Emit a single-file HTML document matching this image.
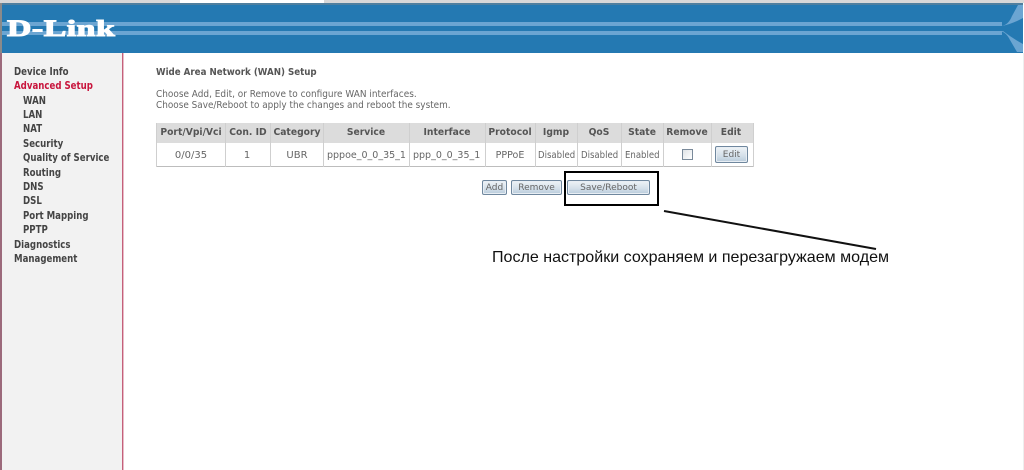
<!DOCTYPE html>
<html><head><meta charset="utf-8"><style>
html,body{margin:0;padding:0;width:1024px;height:470px;overflow:hidden;background:#fff}
.t{position:absolute;white-space:nowrap;font-family:"DejaVu Sans","Liberation Sans",sans-serif;font-size:10px;line-height:14px;color:#666;transform-origin:0 50%}
.c{transform:translateX(-50%)}
.m{font-weight:bold;font-size:10.5px;color:#444;transform:scaleX(.82)}
.h{font-weight:bold;color:#555;transform:translateX(-50%) scaleX(.92);transform-origin:50% 50%}
.b{position:absolute;box-sizing:border-box;border:1px solid #6f879e;border-radius:2px;background:linear-gradient(#eef3f7,#d3dfe9 60%,#b9cbdb);box-shadow:inset 0 0 0 1px #e8eef4;text-align:center;font:9px/15px "DejaVu Sans",sans-serif;color:#666}
.bx{position:absolute;background:#dcdcdc}
.cl{position:absolute;background:#cfcfcf;width:1px;top:123px;height:44px}
</style></head><body>
<div style="position:absolute;left:0;top:0;width:1024px;height:3px;background:#d8d8d8"></div>
<div style="position:absolute;left:180px;top:0;width:144px;height:3px;background:#fff"></div>
<svg style="position:absolute;left:0;top:3px" width="1024" height="50" viewBox="0 3 1024 50">
<rect x="2" y="3" width="1021" height="50" fill="#2479b2"/>
<rect x="2" y="3" width="1021" height="2" fill="#4f7f9f"/>
<rect x="2" y="22" width="1000" height="4" fill="#6ba5d2"/>
<rect x="2" y="31" width="1000" height="4" fill="#6ba5d2"/>
<path d="M1000 26Q1008 26 1012 16L1018 5H1023V18Q1012 24 1002 26Z" fill="#6ba5d2"/>
<path d="M1000 31Q1006 32 1010 40L1017 52H1023V44Q1012 38 1003 31Z" fill="#6ba5d2"/>
<rect x="0" y="3" width="2" height="50" fill="#8a8a8a"/>
</svg>
<div style="position:absolute;left:7px;top:15px;font:bold 23px/28px 'Liberation Serif',serif;color:#fff;letter-spacing:.35px;transform:scaleX(1.47);transform-origin:0 50%;-webkit-text-stroke:1px #fff">D-Link</div>
<div style="position:absolute;left:0;top:53px;width:123px;height:417px;background:#f2f2f2"></div>
<div style="position:absolute;left:0;top:53px;width:2px;height:417px;background:#9c6a7c"></div>
<div style="position:absolute;left:122px;top:53px;width:1px;height:417px;background:#c4607a"></div>
<div style="position:absolute;left:123px;top:53px;width:1px;height:417px;background:#e8bcc8"></div>
<div class="t m" style="left:14px;top:65px">Device Info</div>
<div class="t m" style="left:14px;top:79px;color:#c8143c">Advanced Setup</div>
<div class="t m" style="left:23px;top:94px">WAN</div>
<div class="t m" style="left:23px;top:108px">LAN</div>
<div class="t m" style="left:23px;top:122px">NAT</div>
<div class="t m" style="left:23px;top:137px">Security</div>
<div class="t m" style="left:23px;top:151px">Quality of Service</div>
<div class="t m" style="left:23px;top:166px">Routing</div>
<div class="t m" style="left:23px;top:180px">DNS</div>
<div class="t m" style="left:23px;top:194px">DSL</div>
<div class="t m" style="left:23px;top:209px">Port Mapping</div>
<div class="t m" style="left:23px;top:223px">PPTP</div>
<div class="t m" style="left:14px;top:238px">Diagnostics</div>
<div class="t m" style="left:14px;top:252px">Management</div>
<div class="t" style="left:156px;top:66px;font-weight:bold;font-size:9.5px;color:#555;transform:scaleX(.914)">Wide Area Network (WAN) Setup</div>
<div class="t" style="left:156px;top:88px;font-size:9.5px;transform:scaleX(.94)">Choose Add, Edit, or Remove to configure WAN interfaces.</div>
<div class="t" style="left:156px;top:99px;font-size:9.5px;transform:scaleX(.935)">Choose Save/Reboot to apply the changes and reboot the system.</div>
<div class="bx" style="left:156px;top:123px;width:598px;height:20px"></div>
<div style="position:absolute;left:156px;top:143px;width:598px;height:23px;background:#fff"></div>
<div class="bx" style="left:156px;top:166px;width:598px;height:1px;background:#bdbdbd"></div>
<div class="cl" style="left:156px"></div><div class="cl" style="left:225px"></div><div class="cl" style="left:270px"></div><div class="cl" style="left:323px"></div><div class="cl" style="left:409px"></div><div class="cl" style="left:485px"></div><div class="cl" style="left:535px"></div><div class="cl" style="left:577px"></div><div class="cl" style="left:621px"></div><div class="cl" style="left:663px"></div><div class="cl" style="left:711px"></div><div class="cl" style="left:753px"></div>
<div class="t h" style="left:191px;top:126px">Port/Vpi/Vci</div>
<div class="t h" style="left:248px;top:126px">Con. ID</div>
<div class="t h" style="left:297px;top:126px">Category</div>
<div class="t h" style="left:366px;top:126px">Service</div>
<div class="t h" style="left:447px;top:126px">Interface</div>
<div class="t h" style="left:510px;top:126px">Protocol</div>
<div class="t h" style="left:556px;top:126px">Igmp</div>
<div class="t h" style="left:599px;top:126px">QoS</div>
<div class="t h" style="left:642px;top:126px">State</div>
<div class="t h" style="left:687px;top:126px">Remove</div>
<div class="t h" style="left:731px;top:126px">Edit</div>
<div class="t c" style="left:191px;top:149px">0/0/35</div>
<div class="t c" style="left:247px;top:149px">1</div>
<div class="t c" style="left:297px;top:149px">UBR</div>
<div class="t" style="left:327px;top:149px;font-size:9.5px">pppoe_0_0_35_1</div>
<div class="t" style="left:413px;top:149px;font-size:9.5px">ppp_0_0_35_1</div>
<div class="t c" style="left:510px;top:149px;font-size:9.5px">PPPoE</div>
<div class="t" style="left:538px;top:149px;font-size:9.5px;transform:scaleX(.9)">Disabled</div>
<div class="t" style="left:581px;top:149px;font-size:9.5px;transform:scaleX(.9)">Disabled</div>
<div class="t" style="left:625px;top:149px;font-size:9.5px;transform:scaleX(.9)">Enabled</div>
<div style="position:absolute;left:682px;top:149px;width:9px;height:9px;border:1px solid #7a8a9a;background:linear-gradient(135deg,#dfe3e6,#fff)"></div>
<div class="b" style="left:715px;top:146px;width:33px;height:17px;line-height:17px">Edit</div>
<div class="b" style="left:482px;top:180px;width:25px;height:15px">Add</div>
<div class="b" style="left:511px;top:180px;width:51px;height:15px">Remove</div>
<div class="b" style="left:567px;top:180px;width:83px;height:15px">Save/Reboot</div>
<svg style="position:absolute;left:0;top:0" width="1024" height="470">
<rect x="565" y="172" width="93" height="33" fill="none" stroke="#000" stroke-width="2"/>
<line x1="664" y1="211" x2="876" y2="249" stroke="#111" stroke-width="2"/>
</svg>
<div class="t" style="left:492px;top:247px;font:16.06px/20px 'Liberation Sans',sans-serif;color:#111">После настройки сохраняем и перезагружаем модем</div>
<div style="position:absolute;left:1023px;top:53px;width:1px;height:417px;background:#eee"></div>
</body></html>
